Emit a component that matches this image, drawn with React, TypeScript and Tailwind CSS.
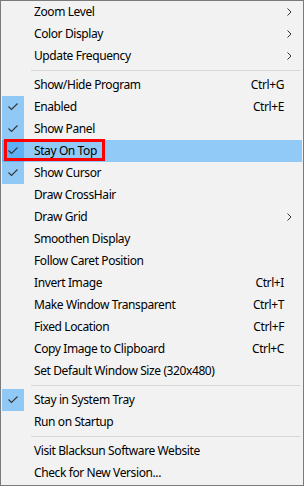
type Item =
  | { kind: "sep" }
  | {
      kind: "item";
      label: string;
      shortcut?: string;
      sub?: boolean;
      checked?: boolean;
      active?: boolean;
    };

const items: Item[] = [
  { kind: "item", label: "Zoom Level", sub: true },
  { kind: "item", label: "Color Display", sub: true },
  { kind: "item", label: "Update Frequency", sub: true },
  { kind: "sep" },
  { kind: "item", label: "Show/Hide Program", shortcut: "Ctrl+G" },
  { kind: "item", label: "Enabled", shortcut: "Ctrl+E", checked: true },
  { kind: "item", label: "Show Panel", checked: true },
  { kind: "item", label: "Stay On Top", checked: true, active: true },
  { kind: "item", label: "Show Cursor", checked: true },
  { kind: "item", label: "Draw CrossHair" },
  { kind: "item", label: "Draw Grid", sub: true },
  { kind: "item", label: "Smoothen Display" },
  { kind: "item", label: "Follow Caret Position" },
  { kind: "item", label: "Invert Image", shortcut: "Ctrl+I" },
  { kind: "item", label: "Make Window Transparent", shortcut: "Ctrl+T" },
  { kind: "item", label: "Fixed Location", shortcut: "Ctrl+F" },
  { kind: "item", label: "Copy Image to Clipboard", shortcut: "Ctrl+C" },
  { kind: "item", label: "Set Default Window Size (320x480)" },
  { kind: "sep" },
  { kind: "item", label: "Stay in System Tray", checked: true },
  { kind: "item", label: "Run on Startup" },
  { kind: "sep" },
  { kind: "item", label: "Visit Blacksun Software Website" },
  { kind: "item", label: "Check for New Version..." },
];

function Check() {
  return (
    <svg width="10" height="8" viewBox="0 0 10 8" fill="none">
      <polyline points="0.5,3.5 3.5,6.5 9.5,0.5" stroke="#333" strokeWidth="1.1" />
    </svg>
  );
}

function Chevron() {
  return (
    <svg width="5" height="8" viewBox="0 0 5 8" fill="none">
      <polyline points="0.5,0.5 4,4 0.5,7.5" stroke="#333" strokeWidth="1" />
    </svg>
  );
}

export default function App() {
  return (
    <div className="w-[304px] h-[486px] bg-[#f2f2f2] border border-[#7a7a7a] pb-px font-['Segoe_UI','Noto_Sans',sans-serif] text-[12px] tracking-[-0.4px] text-black">
      {items.map((it, i) => {
        if (it.kind === "sep") {
          return (
            <div key={i} className="h-[7px] flex items-center">
              <div className="h-px ml-[30px] mr-[3px] flex-1 bg-[#d7d7d7]" />
            </div>
          );
        }
        return (
          <div
            key={i}
            className={`relative mx-px h-[22px] flex items-center ${it.active ? "bg-[#91c9f7]" : ""}`}
          >
            <div
              className={`w-[22px] h-[22px] flex items-center justify-center ${
                it.checked ? (it.active ? "bg-[#5fb1f5]" : "bg-[#90c8f6]") : ""
              }`}
            >
              {it.checked && <Check />}
            </div>
            <span className="ml-[10px] flex-1 whitespace-nowrap">{it.label}</span>
            {it.shortcut && <span className="mr-[18px]">{it.shortcut}</span>}
            {it.sub && (
              <span className="mr-[10px]">
                <Chevron />
              </span>
            )}
            {it.active && (
              <div className="absolute left-[2px] top-[-1px] w-[101px] h-[22px] border-[3px] border-[#ff0000]" />
            )}
          </div>
        );
      })}
    </div>
  );
}
